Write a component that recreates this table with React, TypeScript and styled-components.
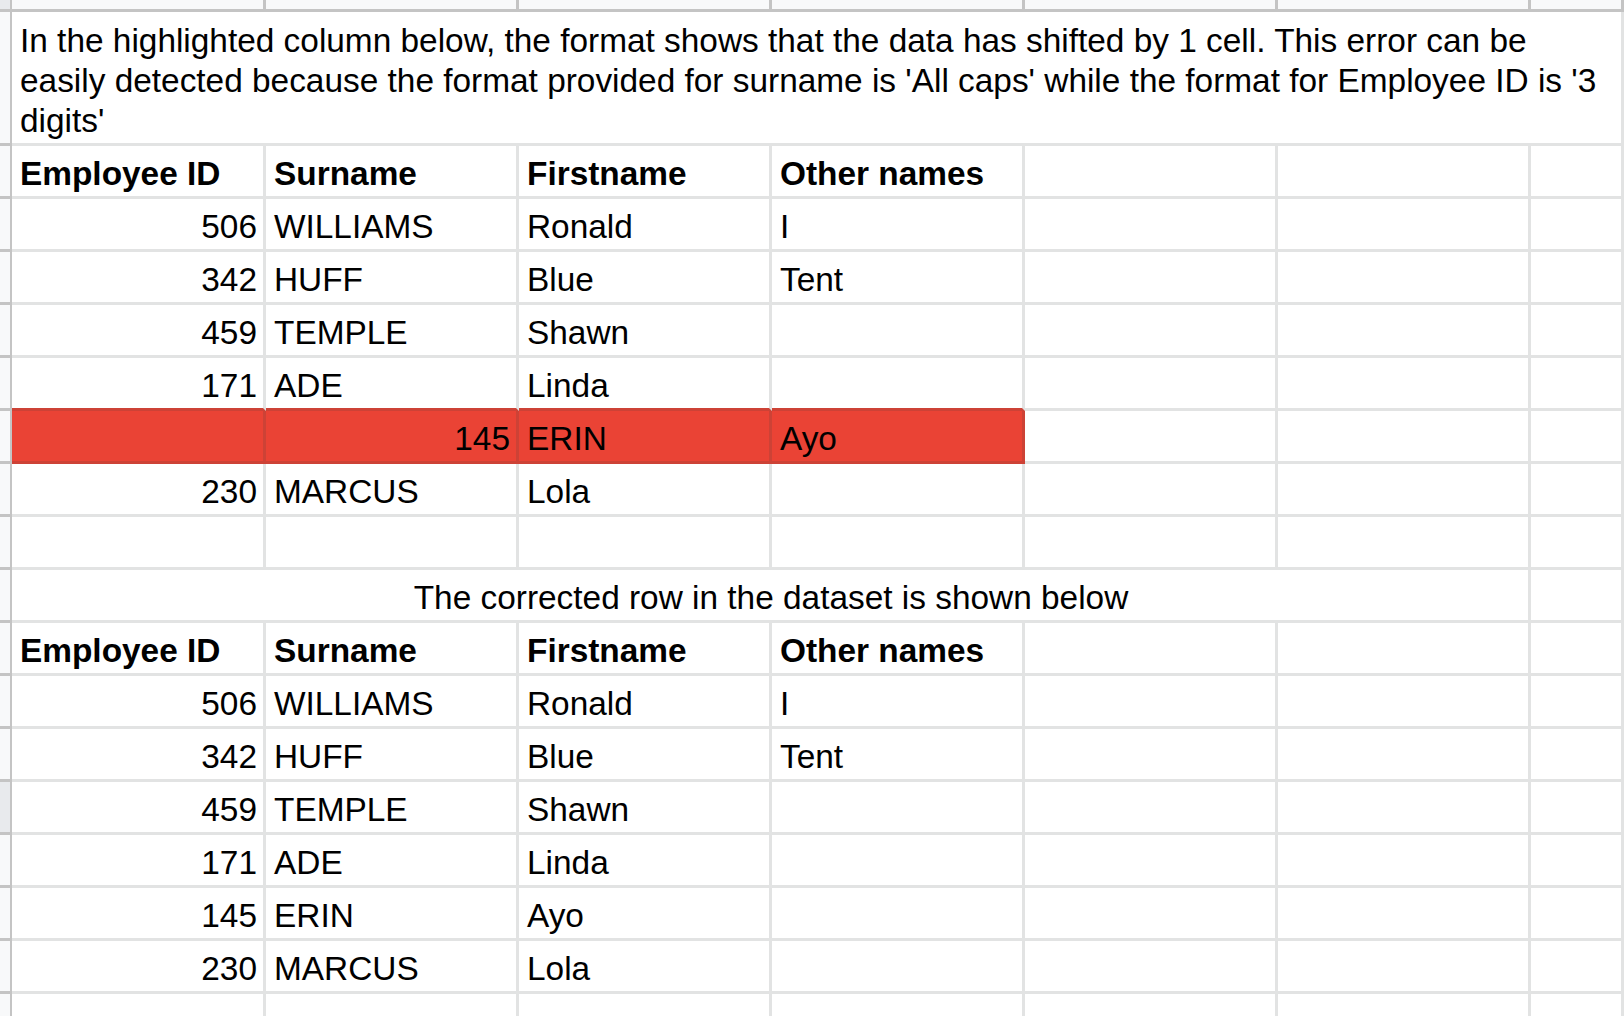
import React from 'react';
import styled, { createGlobalStyle } from 'styled-components';

type Align = 'left' | 'right' | 'center';

type CellData = {
  text?: React.ReactNode;
  align?: Align;
  bold?: boolean;
  span?: number;
  fill?: string;
  wrap?: boolean;
};

type RowData = {
  cells: CellData[];
  selected?: boolean;
};

const GRID = '#e2e3e3';
const HEAD_LINE = '#c4c4c4';
const RED = '#ea4335';
const RED_LINE = '#cd4236';
const COLS = 7;

const GlobalStyle = createGlobalStyle`
  *, *::before, *::after { box-sizing: border-box; }
  html, body { margin: 0; padding: 0; background: #fff; }
  body {
    font-family: "Liberation Sans", Arial, Helvetica, sans-serif;
    color: #000;
    overflow: hidden;
  }
`;

const Sheet = styled.div`
  display: grid;
  grid-template-columns: 12px 254px repeat(5, 253px) 1fr;
  grid-template-rows: 12px 134px;
  grid-auto-rows: 53px;
  height: 1016px;
  overflow: hidden;
`;

const Corner = styled.div`
  background: #e8eaed;
  border-right: 2px solid ${HEAD_LINE};
  border-bottom: 3px solid ${HEAD_LINE};
`;

const ColumnHead = styled.div`
  background: #f8f9fa;
  border-right: 3px solid ${HEAD_LINE};
  border-bottom: 3px solid ${HEAD_LINE};
`;

const RowHead = styled.div<{ $selected?: boolean }>`
  background: ${(p) => (p.$selected ? '#e8eaed' : '#f8f9fa')};
  border-right: 2px solid ${HEAD_LINE};
  border-bottom: 3px solid ${HEAD_LINE};
`;

const justify = { left: 'flex-start', right: 'flex-end', center: 'center' };

const Cell = styled.div<{
  $span: number;
  $align: Align;
  $bold?: boolean;
  $fill?: string;
  $wrap?: boolean;
  $right: string;
  $bottom: string;
}>`
  grid-column: span ${(p) => p.$span};
  display: flex;
  align-items: flex-end;
  justify-content: ${(p) => justify[p.$align]};
  min-width: 0;
  padding: 0 6px 2px 8px;
  background: ${(p) => p.$fill || '#fff'};
  border-right: 3px solid ${(p) => p.$right};
  border-bottom: 3px solid ${(p) => p.$bottom};
  font-size: 33.4px;
  line-height: 40px;
  font-weight: ${(p) => (p.$bold ? 700 : 400)};
  text-align: ${(p) => p.$align};
  white-space: ${(p) => (p.$wrap ? 'normal' : 'nowrap')};
  overflow: hidden;
`;

const num = (text: string): CellData => ({ text, align: 'right' });
const txt = (text: string): CellData => ({ text });
const bold = (text: string): CellData => ({ text, bold: true });
const blank = (n: number): CellData[] => Array.from({ length: n }, () => ({}));

const header: RowData = {
  cells: [bold('Employee ID'), bold('Surname'), bold('Firstname'), bold('Other names'), ...blank(3)],
};

const person = (id: string, surname: string, first: string, other = '', selected = false): RowData => ({
  cells: [num(id), txt(surname), txt(first), txt(other), ...blank(3)],
  selected,
});

const rows: RowData[] = [
  {
    cells: [
      {
        span: 7,
        wrap: true,
        text: (
          <span>
            In the highlighted column below, the format shows that the data has shifted by 1 cell. This error can be
            <br />
            easily detected because the format provided for surname is 'All caps' while the format for Employee ID is '3
            <br />
            digits'
          </span>
        ),
      },
    ],
  },
  header,
  person('506', 'WILLIAMS', 'Ronald', 'I'),
  person('342', 'HUFF', 'Blue', 'Tent'),
  person('459', 'TEMPLE', 'Shawn'),
  person('171', 'ADE', 'Linda'),
  {
    cells: [
      { fill: RED },
      { text: '145', align: 'right', fill: RED },
      { text: 'ERIN', fill: RED },
      { text: 'Ayo', fill: RED },
      ...blank(3),
    ],
  },
  person('230', 'MARCUS', 'Lola'),
  { cells: blank(7) },
  {
    cells: [{ text: 'The corrected row in the dataset is shown below', align: 'center', span: 6 }, {}],
  },
  header,
  person('506', 'WILLIAMS', 'Ronald', 'I'),
  person('342', 'HUFF', 'Blue', 'Tent'),
  person('459', 'TEMPLE', 'Shawn', '', true),
  person('171', 'ADE', 'Linda'),
  person('145', 'ERIN', 'Ayo'),
  person('230', 'MARCUS', 'Lola'),
  { cells: blank(7) },
];

// fill of every column in a row, merged cells spread out
const fills = rows.map((row) => {
  const out: (string | undefined)[] = [];
  row.cells.forEach((c) => {
    for (let i = 0; i < (c.span || 1); i++) out.push(c.fill);
  });
  return out;
});

const isRed = (r: number, c: number) => fills[r] !== undefined && fills[r][c] === RED;

export default function App() {
  return (
    <>
      <GlobalStyle />
      <Sheet>
        <Corner />
        {Array.from({ length: COLS }, (_, i) => (
          <ColumnHead key={i} />
        ))}
        {rows.map((row, r) => {
          let col = 0;
          return (
            <React.Fragment key={r}>
              <RowHead $selected={row.selected} />
              {row.cells.map((cell, i) => {
                const span = cell.span || 1;
                const start = col;
                col += span;
                const last = start + span - 1;
                const right = isRed(r, last) || isRed(r, last + 1) ? RED_LINE : GRID;
                let below = false;
                for (let c = start; c <= last; c++) {
                  if (isRed(r, c) || isRed(r + 1, c)) below = true;
                }
                return (
                  <Cell
                    key={i}
                    $span={span}
                    $align={cell.align || 'left'}
                    $bold={cell.bold}
                    $fill={cell.fill}
                    $wrap={cell.wrap}
                    $right={right}
                    $bottom={below ? RED_LINE : GRID}
                  >
                    {cell.text}
                  </Cell>
                );
              })}
            </React.Fragment>
          );
        })}
      </Sheet>
    </>
  );
}
